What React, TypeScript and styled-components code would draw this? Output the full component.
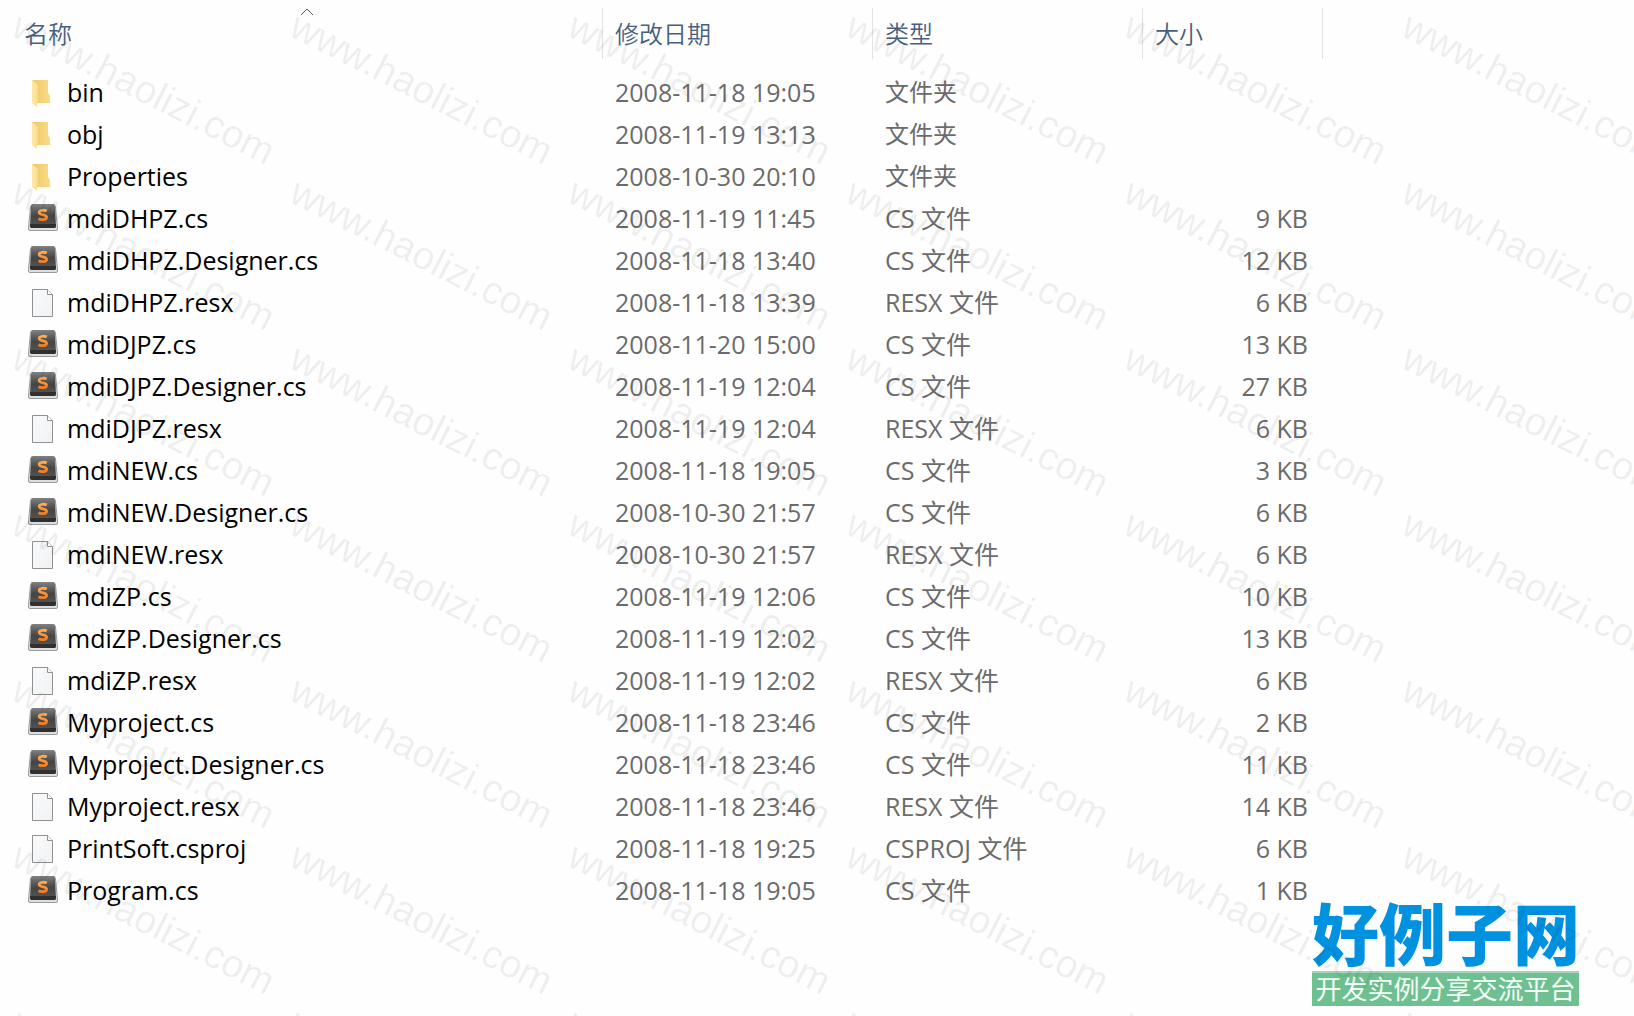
import React from "react";
import styled, { createGlobalStyle } from "styled-components";

const GlobalStyle = createGlobalStyle`
  * { box-sizing: border-box; }
  body {
    margin: 0;
    background: #fefefe;
    font-family: "Open Sans", "Noto Sans CJK SC", sans-serif;
  }
`;

const Page = styled.main`
  position: relative;
  min-height: 100vh;
  overflow: hidden;
  padding: 8px 0 0 14px;
`;

const FileTable = styled.table`
  width: 100%;
  table-layout: fixed;
  border-collapse: separate;
  border-spacing: 0;
`;

const Col = styled.col<{ $width?: number }>`
  width: ${(p) => (p.$width ? `${p.$width}px` : "auto")};
`;

const HeadCell = styled.th<{ $last?: boolean }>`
  position: relative;
  height: 51px;
  padding: 0;
  border-right: ${(p) => (p.$last ? "0" : "1px solid #e2e2e2")};
`;

const SortButton = styled.button<{ $inset: number }>`
  display: block;
  width: 100%;
  height: 51px;
  padding: 0 0 2px ${(p) => p.$inset}px;
  border: 0;
  background: none;
  color: #48607f;
  font: 24px/49px "Noto Sans CJK SC", sans-serif;
  font-weight: 350;
  text-align: left;
`;

const SortMark = styled.svg`
  position: absolute;
  top: 0;
  left: 50%;
  margin-left: -8px;
`;

const Body = styled.tbody`
  &::before {
    content: "";
    display: table-row;
    height: 12px;
  }
`;

const Cell = styled.td<{ $align?: "right" }>`
  height: 42px;
  padding: 0 ${(p) => (p.$align ? 15 : 0)}px 0 12px;
  color: #6b6b6b;
  font-size: 25px;
  line-height: 42px;
  text-align: ${(p) => p.$align ?? "left"};
  white-space: nowrap;
`;

const KindCell = styled(Cell)<{ $folder: boolean }>`
  font-size: ${(p) => (p.$folder ? 24 : 25)}px;
`;

const NameCell = styled(Cell)`
  padding-left: 14px;
  color: #000;
`;

const FileName = styled.div`
  display: flex;
  align-items: center;
  gap: 9px;
  height: 42px;
`;

const Icon = styled.svg`
  flex: none;
  width: 30px;
  height: 32px;
  margin-top: 2px;
`;

const Watermark = styled.div`
  position: absolute;
  inset: 0;
  z-index: 2;
  display: grid;
  grid-template-columns: repeat(6, 278px);
  grid-auto-rows: 166px;
  overflow: hidden;
  pointer-events: none;
`;

const Mark = styled.span`
  padding: 2px 0 0 9px;
  color: rgba(0, 0, 0, 0.07);
  font: 39px/42px "Liberation Sans", Arial, sans-serif;
  white-space: nowrap;
  transform: rotate(27deg);
  transform-origin: 12px 36px;
`;

const Brand = styled.aside`
  position: absolute;
  right: 55px;
  bottom: 10px;
  z-index: 1;
  width: 267px;
  font-family: "Noto Sans CJK SC", sans-serif;
  text-align: center;
  white-space: nowrap;
`;

const BrandName = styled.div`
  padding-bottom: 6px;
  color: #0092e0;
  font-size: 67px;
  font-weight: 900;
  line-height: 68px;
`;

const BrandLine = styled.div`
  height: 35px;
  border-top: 2px solid #a3d6b8;
  background: #6fc091;
  color: #f4fff8;
  font-size: 26px;
  line-height: 30px;
`;

type Kind = "folder" | "cs" | "doc";

function FileIcon({ kind }: { kind: Kind }) {
  if (kind === "folder") {
    return (
      <Icon viewBox="0 0 30 32" aria-hidden="true">
        <defs>
          <linearGradient id="folderBack" x1="0" x2="1">
            <stop offset="0" stopColor="#ecc869" />
            <stop offset="1" stopColor="#fbdc87" />
          </linearGradient>
          <linearGradient id="folderFront" x1="0" x2="1">
            <stop offset="0" stopColor="#ffe9a8" />
            <stop offset="1" stopColor="#fbdc8b" />
          </linearGradient>
        </defs>
        <path d="M4 3H20V16L22 19V25L23 26H9Z" fill="url(#folderBack)" />
        <path d="M4 3L9 7Q10 8 10 10V24L9 25V30L4 26Z" fill="url(#folderFront)" />
      </Icon>
    );
  }
  if (kind === "cs") {
    return (
      <Icon viewBox="0 0 30 32" aria-hidden="true">
        <defs>
          <linearGradient id="keyTop" x1="0" y1="0" x2="0" y2="1">
            <stop offset="0" stopColor="#828282" />
            <stop offset="0.3" stopColor="#5a5a5a" />
            <stop offset="0.5" stopColor="#454545" />
            <stop offset="1" stopColor="#585858" />
          </linearGradient>
          <linearGradient id="keyLetter" x1="0" y1="0" x2="0" y2="1">
            <stop offset="0" stopColor="#ffab50" />
            <stop offset="1" stopColor="#f47e20" />
          </linearGradient>
        </defs>
        <path
          d="M4.500 1.500H25.500Q27 1.500 27.500 4L29.500 24V26Q29.500 27.500 28 27.500H2Q.5 27.500 .5 26V24L2.500 4Q3 1.500 4.500 1.500Z"
          fill="#dedede"
          stroke="#9a9a9a"
        />
        <path d="M5 1H25Q27 1 27 4L28 23Q28 25 26 25H4Q2 25 2 23L3 4Q3 1 5 1Z" fill="url(#keyTop)" />
        <path d="M2 21H28V23Q28 25 26 25H4Q2 25 2 23Z" fill="#303030" />
        <path
          d="M18.800 8C17 7 11.200 6.600 11.200 9.600C11.200 12.800 18.600 11 18.600 14.200C18.600 17.400 12.500 17 10.500 15.800"
          fill="none"
          stroke="url(#keyLetter)"
          strokeWidth="2.800"
        />
      </Icon>
    );
  }
  return (
    <Icon viewBox="0 0 30 32" aria-hidden="true">
      <defs>
        <linearGradient id="sheet" x1="0" y1="0" x2="1" y2="1">
          <stop offset="0" stopColor="#fafafa" />
          <stop offset="1" stopColor="#eff2f5" />
        </linearGradient>
      </defs>
      <path d="M4.500 2.500H19.500L24.500 7.500V29.500H4.500Z" fill="url(#sheet)" stroke="#909090" />
      <path d="M19.500 2.500V7.500H24.500" fill="#fff" stroke="#909090" />
    </Icon>
  );
}

const files: [string, string, string, string][] = [
  ["bin", "2008-11-18 19:05", "文件夹", ""],
  ["obj", "2008-11-19 13:13", "文件夹", ""],
  ["Properties", "2008-10-30 20:10", "文件夹", ""],
  ["mdiDHPZ.cs", "2008-11-19 11:45", "CS 文件", "9 KB"],
  ["mdiDHPZ.Designer.cs", "2008-11-18 13:40", "CS 文件", "12 KB"],
  ["mdiDHPZ.resx", "2008-11-18 13:39", "RESX 文件", "6 KB"],
  ["mdiDJPZ.cs", "2008-11-20 15:00", "CS 文件", "13 KB"],
  ["mdiDJPZ.Designer.cs", "2008-11-19 12:04", "CS 文件", "27 KB"],
  ["mdiDJPZ.resx", "2008-11-19 12:04", "RESX 文件", "6 KB"],
  ["mdiNEW.cs", "2008-11-18 19:05", "CS 文件", "3 KB"],
  ["mdiNEW.Designer.cs", "2008-10-30 21:57", "CS 文件", "6 KB"],
  ["mdiNEW.resx", "2008-10-30 21:57", "RESX 文件", "6 KB"],
  ["mdiZP.cs", "2008-11-19 12:06", "CS 文件", "10 KB"],
  ["mdiZP.Designer.cs", "2008-11-19 12:02", "CS 文件", "13 KB"],
  ["mdiZP.resx", "2008-11-19 12:02", "RESX 文件", "6 KB"],
  ["Myproject.cs", "2008-11-18 23:46", "CS 文件", "2 KB"],
  ["Myproject.Designer.cs", "2008-11-18 23:46", "CS 文件", "11 KB"],
  ["Myproject.resx", "2008-11-18 23:46", "RESX 文件", "14 KB"],
  ["PrintSoft.csproj", "2008-11-18 19:25", "CSPROJ 文件", "6 KB"],
  ["Program.cs", "2008-11-18 19:05", "CS 文件", "1 KB"],
];

function kindOf(name: string): Kind {
  if (!name.includes(".")) return "folder";
  return name.endsWith(".cs") ? "cs" : "doc";
}

export default function App() {
  return (
    <Page>
      <GlobalStyle />
      <FileTable>
        <colgroup>
          <Col $width={589} />
          <Col $width={270} />
          <Col $width={270} />
          <Col $width={180} />
          <Col />
        </colgroup>
        <thead>
          <tr>
            <HeadCell aria-sort="ascending">
              <SortButton $inset={10}>名称</SortButton>
              <SortMark width="14" height="8" viewBox="0 0 14 8" aria-hidden="true">
                <path d="M1 7L7 1L13 7" fill="none" stroke="#555" />
              </SortMark>
            </HeadCell>
            <HeadCell><SortButton $inset={12}>修改日期</SortButton></HeadCell>
            <HeadCell><SortButton $inset={12}>类型</SortButton></HeadCell>
            <HeadCell><SortButton $inset={12}>大小</SortButton></HeadCell>
            <HeadCell as="td" $last />
          </tr>
        </thead>
        <Body>
          {files.map(([name, date, kind, size]) => (
            <tr key={name}>
              <NameCell>
                <FileName>
                  <FileIcon kind={kindOf(name)} />
                  {name}
                </FileName>
              </NameCell>
              <Cell>{date}</Cell>
              <KindCell $folder={kindOf(name) === "folder"}>{kind}</KindCell>
              <Cell $align="right">{size}</Cell>
              <Cell />
            </tr>
          ))}
        </Body>
      </FileTable>
      <Brand>
        <BrandName>好例子网</BrandName>
        <BrandLine>开发实例分享交流平台</BrandLine>
      </Brand>
      <Watermark aria-hidden="true">
        {Array.from({ length: 42 }, (_, i) => (
          <Mark key={i}>www.haolizi.com</Mark>
        ))}
      </Watermark>
    </Page>
  );
}
